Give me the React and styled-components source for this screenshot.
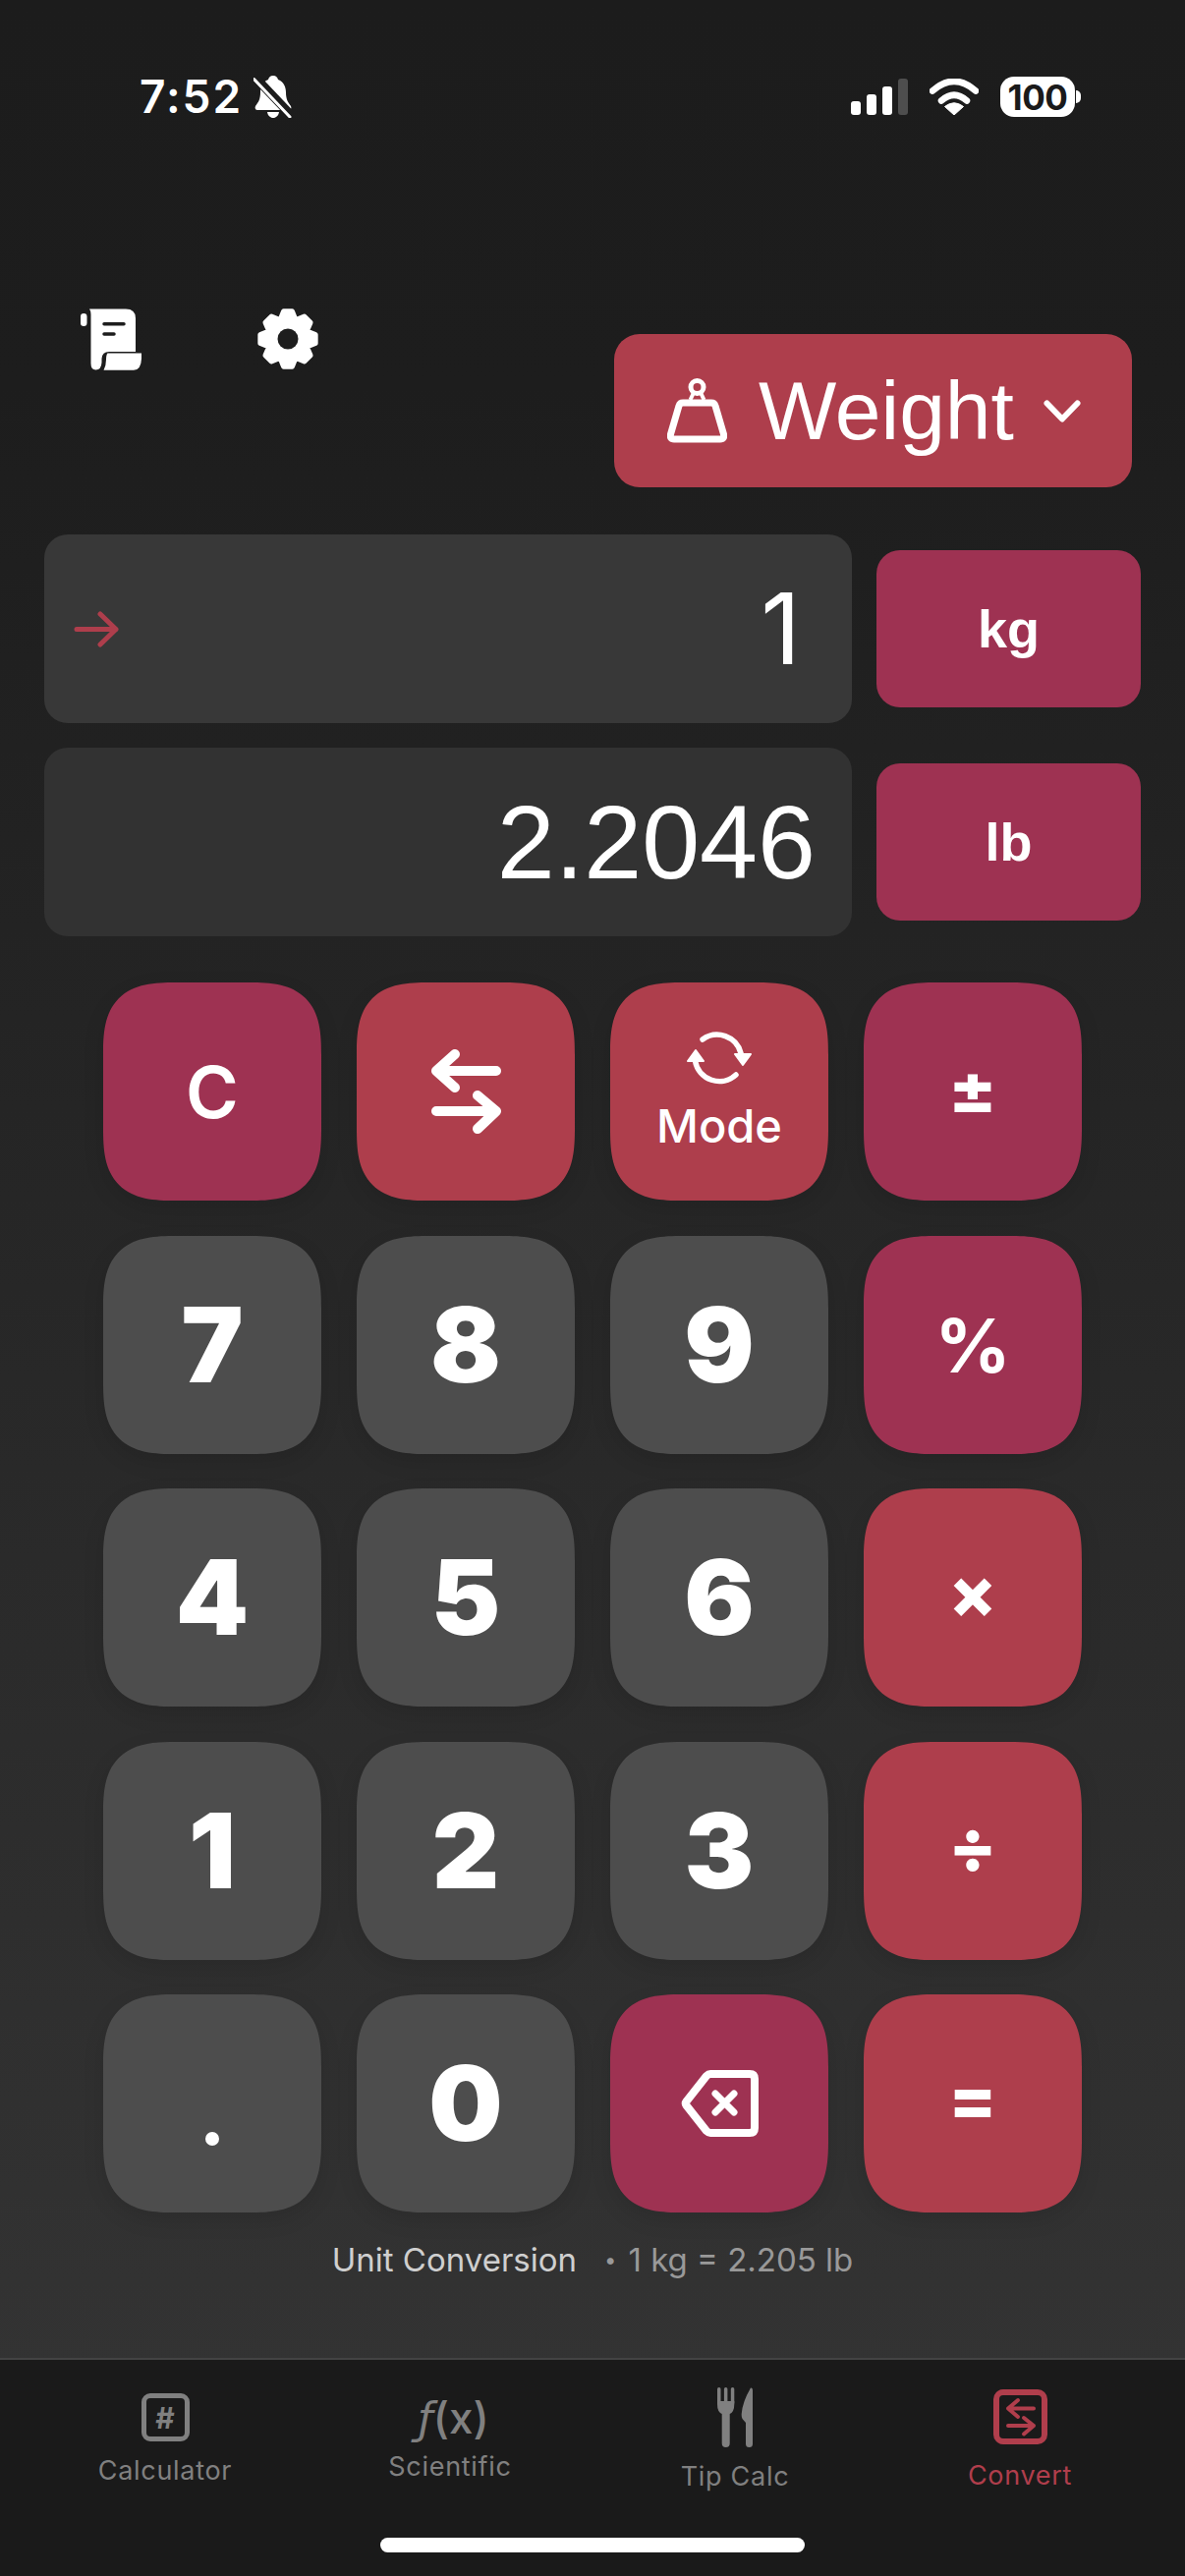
import React from 'react';
import styled, { createGlobalStyle } from 'styled-components';

const PLUM = '#9e3252';
const RED = '#ae3e4c';
const GRAY = '#4d4d4d';
const MUTED = '#808080';

const GlobalStyle = createGlobalStyle`
  html, body {
    margin: 0;
    padding: 0;
    background: #1a1a1a;
  }
`;

const Page = styled.div`
  width: 1206px;
  height: 2622px;
  display: flex;
  flex-direction: column;
  overflow: hidden;
  color: #fff;
  font-family: Inter, "Liberation Sans", sans-serif;
  background: linear-gradient(180deg, #1c1c1c 0%, #1d1d1d 15%, #333333 92%);
`;

const StatusBar = styled.div`
  height: 43px;
  margin-top: 77px;
  padding: 0 106px 0 142px;
  display: flex;
  align-items: center;
  justify-content: space-between;
`;

const StatusLeft = styled.div`
  display: flex;
  align-items: center;
  gap: 11px;
`;

const Time = styled.span`
  font-size: 46px;
  font-weight: 600;
  line-height: 43px;
  letter-spacing: 2px;
`;

const StatusRight = styled.div`
  display: flex;
  align-items: center;
  gap: 22px;
`;

const Signal = styled.div`
  display: flex;
  align-items: flex-end;
  gap: 6px;
  height: 37px;
`;

const SignalBar = styled.div`
  width: 10px;
  height: ${(p) => p.$h}px;
  border-radius: 3px;
  background: ${(p) => (p.$off ? '#4e4e4e' : '#fff')};
`;

const Battery = styled.div`
  display: flex;
  align-items: center;
  gap: 1px;
`;

const BatteryBody = styled.div`
  width: 76px;
  height: 41px;
  border-radius: 14px;
  background: #fff;
  color: #1a1a1a;
  display: flex;
  align-items: center;
  justify-content: center;
  font-size: 35px;
  font-weight: 700;
  letter-spacing: -0.5px;
`;

const BatteryNub = styled.div`
  width: 5px;
  height: 13px;
  border-radius: 0 5px 5px 0;
  background: #fff;
`;

const Toolbar = styled.div`
  margin-top: 194px;
  padding: 0 54px 0 82px;
  display: flex;
  justify-content: space-between;
  align-items: flex-start;
`;

const ToolIcons = styled.div`
  display: flex;
  gap: 118px;
`;

const TypeButton = styled.div`
  width: 527px;
  height: 156px;
  margin-top: 26px;
  border-radius: 26px;
  background: ${RED};
  display: flex;
  align-items: center;
  padding-left: 54px;
  box-sizing: border-box;
`;

const TypeLabel = styled.span`
  margin-left: 32px;
  margin-right: 30px;
  font-family: "Liberation Sans", Arial, sans-serif;
  font-size: 84px;
  line-height: 1;
`;

const Displays = styled.div`
  margin-top: 48px;
  padding-left: 45px;
  display: flex;
  flex-direction: column;
  gap: 25px;
`;

const DisplayRow = styled.div`
  display: flex;
  align-items: center;
  gap: 25px;
`;

const ValuePanel = styled.div`
  width: 822px;
  height: 192px;
  box-sizing: border-box;
  padding: 0 37px 0 30px;
  border-radius: 24px;
  background: ${(p) => (p.$active ? '#383838' : '#323232')};
  display: flex;
  align-items: center;
  justify-content: space-between;
`;

const Value = styled.span`
  margin-left: auto;
  font-family: "Liberation Sans", Arial, sans-serif;
  font-size: 106px;
  line-height: 1;
`;

/* the reference's 1 has no foot serif, Liberation's has */
const PlainValue = styled.span`
  margin-left: auto;
  margin-right: 15px;
  font-family: Inter, sans-serif;
  font-size: 100px;
  font-weight: 400;
  line-height: 1;
`;

const UnitButton = styled.div`
  width: 269px;
  height: 160px;
  border-radius: 24px;
  background: ${PLUM};
  display: flex;
  align-items: center;
  justify-content: center;
  font-family: "Liberation Sans", Arial, sans-serif;
  font-size: 54px;
  font-weight: 700;
`;

const Keypad = styled.div`
  margin-top: 47px;
  padding-left: 105px;
  display: grid;
  grid-template-columns: repeat(4, 222px);
  grid-auto-rows: 222px;
  column-gap: 36px;
  row-gap: 35.5px;
`;

const toneColor = { gray: GRAY, plum: PLUM, red: RED };

const Key = styled.div`
  box-sizing: border-box;
  padding-bottom: ${(p) => p.$lift || 0}px;
  border-radius: 74px;
  corner-shape: superellipse(1.5);
  background: ${(p) => toneColor[p.$tone]};
  box-shadow: 0 8px 22px rgba(0, 0, 0, 0.11);
  display: flex;
  flex-direction: column;
  align-items: center;
  justify-content: center;
  font-size: ${(p) => p.$size || 106}px;
  font-weight: ${(p) => p.$weight || 900};
  line-height: 1;
`;

const ModeLabel = styled.span`
  margin-top: 22px;
  font-size: 47px;
  font-weight: 500;
  line-height: 40px;
`;

const Dot = styled.span`
  width: 14px;
  height: 14px;
  margin-top: 72px;
  border-radius: 50%;
  background: #fff;
`;

const Caption = styled.div`
  margin-top: 30px;
  height: 36px;
  display: flex;
  justify-content: center;
  align-items: center;
  gap: 28px;
  font-size: 33px;
  line-height: 36px;
  color: #cfcfcf;
`;

const CaptionNote = styled.span`
  display: flex;
  align-items: center;
  gap: 12px;
  color: #999;
`;

const CaptionDot = styled.span`
  font-size: 22px;
`;

const TabBar = styled.div`
  margin-top: 82px;
  flex: 1;
  padding: 0 23px;
  border-top: 2px solid #434343;
  background: #1a1a1a;
  display: flex;
  flex-direction: column;
`;

const Tabs = styled.div`
  display: grid;
  grid-template-columns: repeat(4, 1fr);
`;

const Tab = styled.div`
  padding-top: ${(p) => p.$top}px;
  display: flex;
  flex-direction: column;
  align-items: center;
  color: ${(p) => (p.$active ? '#b03e4c' : MUTED)};
`;

const TabLabel = styled.span`
  margin-top: ${(p) => p.$gap}px;
  font-size: 27px;
  line-height: 32px;
  letter-spacing: 0.7px;
`;

const HashIcon = styled.div`
  width: 49px;
  height: 49px;
  box-sizing: border-box;
  border: 5px solid ${MUTED};
  border-radius: 9px;
  display: flex;
  align-items: center;
  justify-content: center;
  font-size: 30px;
  font-weight: 700;
  line-height: 1;
`;

const FxIcon = styled.div`
  height: 40px;
  padding-left: 7px;
  font-size: 44px;
  font-weight: 500;
  line-height: 40px;
  white-space: nowrap;
`;

const FxLetter = styled.span`
  font-family: "DejaVu Sans", sans-serif;
  font-style: italic;
  font-size: 44px;
  font-weight: 500;
`;

const HomeIndicator = styled.div`
  width: 432px;
  height: 15px;
  margin: auto auto 24px;
  border-radius: 8px;
  background: #fff;
`;

function gearPoints() {
  const pts = [];
  for (let i = 0; i < 8; i++) {
    const a = (i * Math.PI) / 4 - Math.PI / 2;
    const step = Math.PI / 180;
    [[-21, 21.5], [-9, 28.5], [9, 28.5], [21, 21.5]].forEach(([d, r]) => {
      pts.push(`${(31 + r * Math.cos(a + d * step)).toFixed(2)},${(31 + r * Math.sin(a + d * step)).toFixed(2)}`);
    });
  }
  return pts.join(' ');
}

const BellIcon = () => (
  <svg width="40" height="43" viewBox="0 0 40 43">
    <path d="M20 0c3 0 4.500 2 5 4 6 2 8 8 8 13 0 7 2 10 5 14 1 2 0 4-2 4H4c-2 0-3-2-2-4 3-4 5-7 5-14 0-5 2-11 8-13 .5-2 2-4 5-4Z" fill="#fff" />
    <path d="M14 37h12c-.5 3.500-3 6-6 6s-5.500-2.500-6-6Z" fill="#fff" />
    <path d="M2 2 39 41" stroke="#1c1c1c" strokeWidth="9" />
    <path d="M.5 3.500 37 42" stroke="#fff" strokeWidth="3" strokeLinecap="round" />
  </svg>
);

const WifiIcon = () => (
  <svg width="50" height="37" viewBox="0 0 50 37">
    <path d="M3 12.500Q25-7 47 12.500" fill="none" stroke="#fff" strokeWidth="6.500" strokeLinecap="round" />
    <path d="M12 22.500Q25 11 38 22.500" fill="none" stroke="#fff" strokeWidth="6.500" strokeLinecap="round" />
    <path d="M25 37 15.500 28.500Q25 21 34.500 28.500Z" fill="#fff" stroke="#fff" strokeLinejoin="round" />
  </svg>
);

const ScrollIcon = () => (
  <svg width="62" height="63" viewBox="0 0 62 63">
    <rect x="0" y="5" width="6.500" height="13" rx="3.200" fill="#fff" />
    <path d="M9 0.500H46Q56 0.500 56 10V44H29Q22 44 21.500 51V55Q21 62.500 15.500 62.500 10.500 62.500 10.500 56V6Q10.500 2.500 9 0.500Z" fill="#fff" />
    <path d="M27.500 45.500H62V51Q61.500 62.800 54 62.800H23.500Q26 58 26 52 26 47 27.500 45.500Z" fill="#fff" />
    <path d="M24 15.700H44M24 26H34" stroke="#1d1d1d" strokeWidth="3.500" strokeLinecap="round" />
  </svg>
);

const GearIcon = () => (
  <svg width="62" height="62" viewBox="0 0 62 62">
    <polygon points={gearPoints()} fill="#fff" stroke="#fff" strokeWidth="5" strokeLinejoin="round" />
    <circle cx="31" cy="31" r="10.500" fill="#1d1d1d" />
  </svg>
);

const WeightIcon = () => (
  <svg width="61" height="66" viewBox="0 0 61 66" fill="none" stroke="#fff">
    <circle cx="30.500" cy="9" r="6.500" strokeWidth="5" />
    <path d="M27 14.500 23.500 22M34 14.500 37.500 22" strokeWidth="4" />
    <path d="M16 25H45Q48 25 49 28L57.500 57Q58.500 62 54 62H7Q2.500 62 3.500 57L12 28Q13 25 16 25Z" strokeWidth="7" strokeLinejoin="round" />
  </svg>
);

const Chevron = () => (
  <svg width="38" height="23" viewBox="0 0 38 23" fill="none" stroke="#fff" strokeWidth="6" strokeLinecap="round" strokeLinejoin="round">
    <path d="M3.500 3.500 19 19.500 34.500 3.500" />
  </svg>
);

const ArrowIcon = () => (
  <svg width="46" height="37" viewBox="0 0 46 37" fill="none" stroke={RED} strokeWidth="5" strokeLinecap="round" strokeLinejoin="round">
    <path d="M3 18.500H43M27 3 43 18.500 27 34" />
  </svg>
);

const SwapIcon = () => (
  <svg width="71" height="86" viewBox="0 0 71 86" fill="none" stroke="#fff" strokeWidth="10" strokeLinecap="round" strokeLinejoin="round">
    <path d="M66 22H5M24 5 5 22 24 39" />
    <path d="M5 63H66M47 47 66 63 47 81" />
  </svg>
);

const ModeIcon = () => (
  <svg width="66" height="56" viewBox="0 0 66 56">
    <g fill="none" stroke="#fff" strokeWidth="5.500" strokeLinecap="round">
      <path d="M16 10A25 25 0 0 1 55 24" />
      <path d="M50 46A25 25 0 0 1 8.500 32" />
    </g>
    <g fill="#fff" stroke="#fff" strokeWidth="2" strokeLinejoin="round">
      <path d="M49 25H65L57 36Z" />
      <path d="M1 32H17L9 21Z" />
    </g>
  </svg>
);

const BackspaceIcon = () => (
  <svg width="79" height="68" viewBox="0 0 79 68" fill="none" stroke="#fff" strokeWidth="8" strokeLinecap="round" strokeLinejoin="round">
    <path d="M30 4H70Q75 4 75 9V59Q75 64 70 64H30Q28 64 26 62L5.500 36Q4 34 5.500 32L26 6Q28 4 30 4Z" />
    <path d="M35 24 54 43M54 24 35 43" strokeWidth="7" />
  </svg>
);

const CutleryIcon = () => (
  <svg width="36" height="61" viewBox="0 0 36 61" fill={MUTED}>
    <path d="M1.750 1.750V16M8.650 1.750V16M15.550 1.750V16" stroke={MUTED} strokeWidth="3.500" strokeLinecap="round" />
    <path d="M0 14H17.300V17Q17.300 25 12.700 27V57A4 4 0 0 1 4.700 57V27Q0 25 0 17Z" />
    <path d="M34 .5Q36 0 36 3V57.500A3.500 3.500 0 0 1 29 57.500V36L25.500 32Q24.500 30.500 24.700 27 25.500 15 34 .5Z" />
  </svg>
);

const ConvertIcon = () => (
  <svg width="55" height="56" viewBox="0 0 55 56" fill="none" stroke="#b03e4c" strokeLinecap="round" strokeLinejoin="round">
    <rect x="3" y="3" width="49" height="50" rx="7" strokeWidth="6" />
    <path d="M41 19.500H15M25 11 15 19.500 25 28" strokeWidth="4" />
    <path d="M15 37H41M31 29 41 37 31 45.500" strokeWidth="4" />
  </svg>
);

const keys = [
  { id: 'c', tone: 'plum', text: 'C', size: 73, weight: 600 },
  { id: 'swap', tone: 'red', icon: <SwapIcon /> },
  { id: 'mode', tone: 'red', icon: <ModeIcon />, label: 'Mode', lift: 9 },
  { id: 'sign', tone: 'plum', text: '±', size: 72, weight: 800, lift: 6 },
  { id: '7', tone: 'gray', text: '7' },
  { id: '8', tone: 'gray', text: '8' },
  { id: '9', tone: 'gray', text: '9' },
  { id: 'pct', tone: 'plum', text: '%', size: 76, weight: 700 },
  { id: '4', tone: 'gray', text: '4' },
  { id: '5', tone: 'gray', text: '5' },
  { id: '6', tone: 'gray', text: '6' },
  { id: 'mul', tone: 'red', text: '×', size: 72, weight: 800, lift: 10 },
  { id: '1', tone: 'gray', text: '1' },
  { id: '2', tone: 'gray', text: '2' },
  { id: '3', tone: 'gray', text: '3' },
  { id: 'div', tone: 'red', text: '÷', size: 72, weight: 800, lift: 10 },
  { id: 'dot', tone: 'gray', dot: true },
  { id: '0', tone: 'gray', text: '0' },
  { id: 'back', tone: 'plum', icon: <BackspaceIcon /> },
  { id: 'eq', tone: 'red', text: '=', size: 72, weight: 800, lift: 10 },
];

const tabs = [
  { label: 'Calculator', top: 34, gap: 14, icon: <HashIcon>#</HashIcon> },
  { label: 'Scientific', top: 39, gap: 14, icon: <FxIcon><FxLetter>ƒ</FxLetter>(x)</FxIcon> },
  { label: 'Tip Calc', top: 28, gap: 14, icon: <CutleryIcon /> },
  { label: 'Convert', top: 30, gap: 16, icon: <ConvertIcon />, active: true },
];

export default function App() {
  return (
    <Page>
      <GlobalStyle />
      <StatusBar>
        <StatusLeft>
          <Time>7:52</Time>
          <BellIcon />
        </StatusLeft>
        <StatusRight>
          <Signal>
            <SignalBar $h={14} />
            <SignalBar $h={21} />
            <SignalBar $h={29} />
            <SignalBar $h={37} $off />
          </Signal>
          <WifiIcon />
          <Battery>
            <BatteryBody>100</BatteryBody>
            <BatteryNub />
          </Battery>
        </StatusRight>
      </StatusBar>

      <Toolbar>
        <ToolIcons>
          <ScrollIcon />
          <GearIcon />
        </ToolIcons>
        <TypeButton>
          <WeightIcon />
          <TypeLabel>Weight</TypeLabel>
          <Chevron />
        </TypeButton>
      </Toolbar>

      <Displays>
        <DisplayRow>
          <ValuePanel $active>
            <ArrowIcon />
            <PlainValue>1</PlainValue>
          </ValuePanel>
          <UnitButton>kg</UnitButton>
        </DisplayRow>
        <DisplayRow>
          <ValuePanel>
            <Value>2.2046</Value>
          </ValuePanel>
          <UnitButton>lb</UnitButton>
        </DisplayRow>
      </Displays>

      <Keypad>
        {keys.map((k) => (
          <Key key={k.id} $tone={k.tone} $size={k.size} $weight={k.weight} $lift={k.lift}>
            {k.text}
            {k.icon}
            {k.label && <ModeLabel>{k.label}</ModeLabel>}
            {k.dot && <Dot />}
          </Key>
        ))}
      </Keypad>

      <Caption>
        <span>Unit Conversion</span>
        <CaptionNote>
          <CaptionDot>•</CaptionDot>
          1 kg = 2.205 lb
        </CaptionNote>
      </Caption>

      <TabBar>
        <Tabs>
          {tabs.map((t) => (
            <Tab key={t.label} $top={t.top} $active={t.active}>
              {t.icon}
              <TabLabel $gap={t.gap}>{t.label}</TabLabel>
            </Tab>
          ))}
        </Tabs>
        <HomeIndicator />
      </TabBar>
    </Page>
  );
}
